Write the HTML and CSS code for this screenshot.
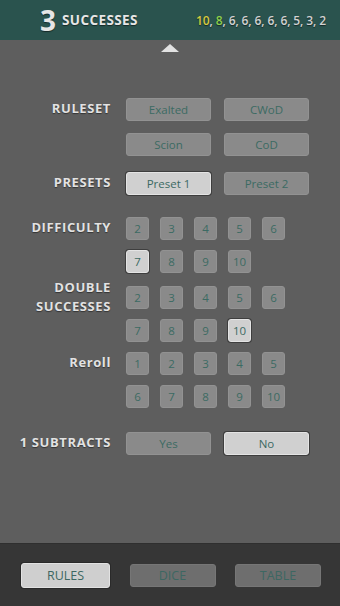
FILE: index.html
```html
<!DOCTYPE html>
<html>
<head>
<meta charset="utf-8">
<link rel="stylesheet" href="styles.css">
</head>
<body>
<div class="app">
  <header class="top">
    <div class="count"><span class="num">3</span><span class="word">SUCCESSES</span></div>
    <div class="rolls"><span class="y">10</span>, <span class="g">8</span>, 6, 6, 6, 6, 6, 5, 3, 2</div>
  </header>
  <div class="arrow-wrap"><div class="arrow"></div></div>
  <main class="rules">
    <div class="sec s-ruleset">
      <div class="label">RULESET</div>
      <div class="opts wide">
        <div class="btn">Exalted</div>
        <div class="btn">CWoD</div>
        <div class="btn">Scion</div>
        <div class="btn">CoD</div>
      </div>
    </div>
    <div class="sec s-presets">
      <div class="label">PRESETS</div>
      <div class="opts wide">
        <div class="btn sel">Preset 1</div>
        <div class="btn">Preset 2</div>
      </div>
    </div>
    <div class="sec s-diff">
      <div class="label">DIFFICULTY</div>
      <div class="opts small">
        <div class="btn">2</div><div class="btn">3</div><div class="btn">4</div><div class="btn">5</div><div class="btn">6</div>
        <div class="btn sel">7</div><div class="btn">8</div><div class="btn">9</div><div class="btn">10</div>
      </div>
    </div>
    <div class="sec s-double">
      <div class="label two">DOUBLE<br>SUCCESSES</div>
      <div class="opts small">
        <div class="btn">2</div><div class="btn">3</div><div class="btn">4</div><div class="btn">5</div><div class="btn">6</div>
        <div class="btn">7</div><div class="btn">8</div><div class="btn">9</div><div class="btn sel">10</div>
      </div>
    </div>
    <div class="sec s-reroll">
      <div class="label">Reroll</div>
      <div class="opts small">
        <div class="btn">1</div><div class="btn">2</div><div class="btn">3</div><div class="btn">4</div><div class="btn">5</div>
        <div class="btn">6</div><div class="btn">7</div><div class="btn">8</div><div class="btn">9</div><div class="btn">10</div>
      </div>
    </div>
    <div class="sec s-sub">
      <div class="label">1 SUBTRACTS</div>
      <div class="opts wide">
        <div class="btn">Yes</div>
        <div class="btn sel">No</div>
      </div>
    </div>
  </main>
  <nav class="tabs">
    <div class="tab sel">RULES</div>
    <div class="tab">DICE</div>
    <div class="tab">TABLE</div>
  </nav>
</div>
</body>
</html>
```
FILE: styles.css
```css
html, body {
  margin: 0;
  padding: 0;
}
body {
  background: #5e5e5e;
  font-family: "Open Sans", "Noto Sans", sans-serif;
}
.app {
  width: 340px;
  height: 606px;
  display: flex;
  flex-direction: column;
  background: #5e5e5e;
}
.top {
  height: 40px;
  background: #2a534e;
  display: flex;
  align-items: center;
  justify-content: space-between;
  padding: 0 14px 0 40px;
  box-sizing: border-box;
}
.count {
  display: flex;
  align-items: center;
  color: #e6e6e6;
  font-weight: 700;
  text-shadow: 0 1px 1px rgba(0,0,0,0.5);
}
.num {
  font-size: 28px;
  line-height: 30px;
  margin-right: 6px;
}
.word {
  font-size: 13.5px;
  letter-spacing: 0.4px;
}
.rolls {
  color: #d2d2d2;
  font-size: 12px;
  font-weight: 600;
  letter-spacing: -0.1px;
  text-shadow: 0 1px 1px rgba(0,0,0,0.5);
}
.rolls .y { color: #d6c93e; }
.rolls .g { color: #8ed04c; }
.arrow-wrap {
  display: flex;
  justify-content: center;
  padding-top: 4px;
  height: 8px;
}
.arrow {
  width: 0;
  height: 0;
  border-left: 9px solid transparent;
  border-right: 9px solid transparent;
  border-bottom: 8px solid #e2e2e2;
}
.rules {
  flex: 1;
  padding-top: 46px;
}
.sec {
  display: grid;
  grid-template-columns: 111px 1fr;
  column-gap: 15px;
}
.s-presets { margin-top: 16px; }
.s-diff { margin-top: 22px; }
.s-double { margin-top: 13px; }
.s-reroll { margin-top: 10px; }
.s-sub { margin-top: 24px; }
.label {
  text-align: right;
  color: #e2e2e2;
  font-weight: 700;
  font-size: 13px;
  letter-spacing: 0.6px;
  line-height: 19px;
  padding-top: 1px;
  text-shadow: 0 1px 1px rgba(0,0,0,0.45);
}
.label.two {
  padding-top: 0;
  margin-top: -8px;
}
.opts {
  display: flex;
  flex-wrap: wrap;
}
.opts.wide {
  width: 200px;
  column-gap: 13px;
  row-gap: 12px;
}
.opts.small {
  width: 170px;
  column-gap: 11px;
  row-gap: 10px;
}
.btn {
  box-sizing: border-box;
  height: 23px;
  background: #8a8a8a;
  border: 1px solid #929292;
  border-radius: 3px;
  color: #3c6a63;
  font-size: 11.5px;
  display: flex;
  align-items: center;
  justify-content: center;
}
.wide .btn { width: 85px; }
.small .btn { width: 23px; }
.btn.sel {
  background: #d0d0d0;
  border-color: #e4e4e4;
  box-shadow: 0 0 0 1px #3e3e3e;
}
.tabs {
  height: 63px;
  background: #363636;
  border-top: 1px solid #2f2f2f;
  box-sizing: border-box;
  display: flex;
  align-items: center;
  justify-content: space-between;
  padding: 0 19px 0 21px;
}
.tab {
  box-sizing: border-box;
  width: 86px;
  height: 23px;
  background: #6e6e6e;
  border: 1px solid #767676;
  border-radius: 3px;
  color: #3d6762;
  font-size: 12.5px;
  display: flex;
  align-items: center;
  justify-content: center;
}
.tab.sel {
  width: 89px;
  height: 25px;
  background: #cfcfcf;
  border-color: #e2e2e2;
  box-shadow: 0 0 0 1px #2a2a2a;
}
```
